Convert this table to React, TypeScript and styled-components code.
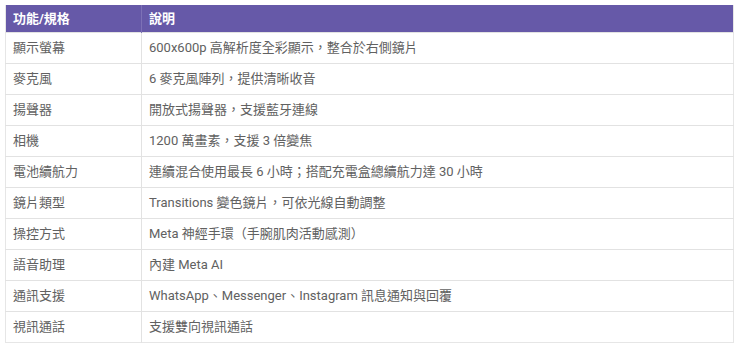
import React from "react";
import styled, { createGlobalStyle } from "styled-components";

const Global = createGlobalStyle`
  html, body { margin: 0; padding: 0; background: #ffffff; }
  body { font-family: Roboto, "Noto Sans CJK TC", sans-serif; }
`;

const Wrap = styled.div`
  padding: 5px 6px 0 5px;
`;

const Table = styled.table`
  width: 729px;
  border-collapse: collapse;
  font-size: 13px;
  color: #616161;
  border: 1px solid #e6e6e6;
  border-top: none;
`;

const HeadCell = styled.th`
  background: #6659a8;
  color: #ffffff;
  font-weight: 700;
  text-align: left;
  padding: 4px 7px;
  line-height: 19px;
  border-right: 1px solid #7d71b6;
  &:last-child { border-right: none; }
`;

const Cell = styled.td<{ $first?: boolean }>`
  padding: 5px 7px;
  line-height: 20px;
  border-top: 1px solid #e2e2e2;
  border-right: ${(p) => (p.$first ? "1px solid #e2e2e2" : "none")};
  width: ${(p) => (p.$first ? "121px" : "auto")};
  white-space: nowrap;
`;

const rows: [string, string][] = [
  ["顯示螢幕", "600x600p 高解析度全彩顯示，整合於右側鏡片"],
  ["麥克風", "6 麥克風陣列，提供清晰收音"],
  ["揚聲器", "開放式揚聲器，支援藍牙連線"],
  ["相機", "1200 萬畫素，支援 3 倍變焦"],
  ["電池續航力", "連續混合使用最長 6 小時；搭配充電盒總續航力達 30 小時"],
  ["鏡片類型", "Transitions 變色鏡片，可依光線自動調整"],
  ["操控方式", "Meta 神經手環（手腕肌肉活動感測）"],
  ["語音助理", "內建 Meta AI"],
  ["通訊支援", "WhatsApp、Messenger、Instagram 訊息通知與回覆"],
  ["視訊通話", "支援雙向視訊通話"],
];

export default function App() {
  return (
    <Wrap>
      <Global />
      <Table>
        <thead>
          <tr>
            <HeadCell>功能/規格</HeadCell>
            <HeadCell>說明</HeadCell>
          </tr>
        </thead>
        <tbody>
          {rows.map(([k, v]) => (
            <tr key={k}>
              <Cell $first>{k}</Cell>
              <Cell>{v}</Cell>
            </tr>
          ))}
        </tbody>
      </Table>
    </Wrap>
  );
}
